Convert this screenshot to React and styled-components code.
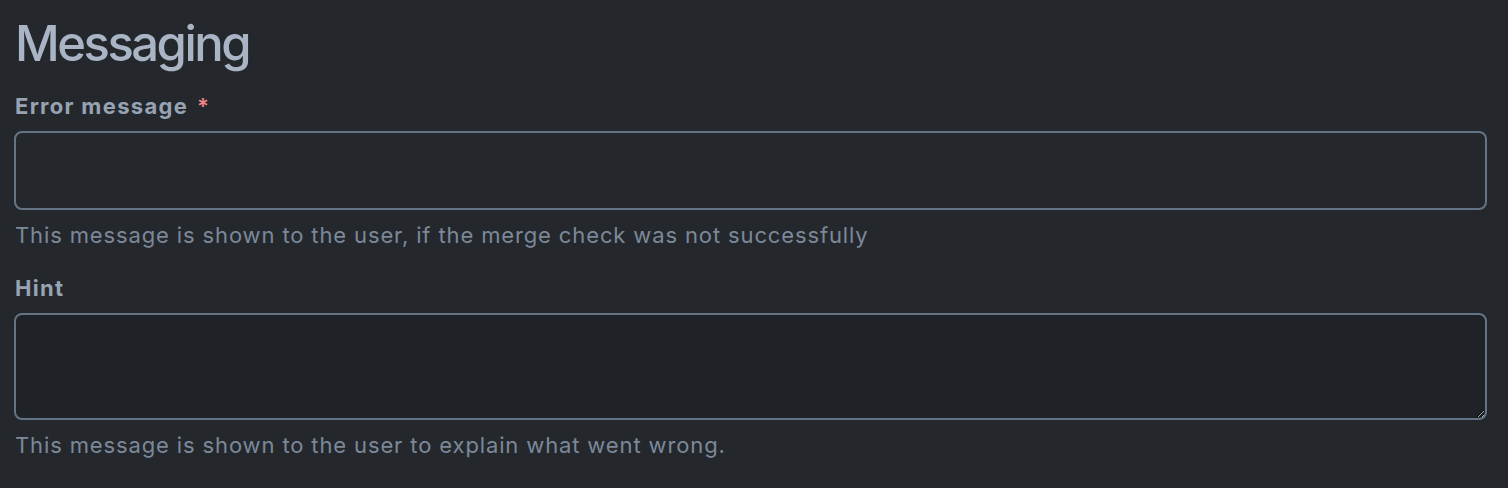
import React from "react";
import styled, { createGlobalStyle } from "styled-components";

const Global = createGlobalStyle`
  html, body {
    margin: 0;
    padding: 0;
    background: #24282d;
  }
  body {
    font-family: Inter, "Noto Sans", sans-serif;
  }
`;

const Page = styled.div`
  padding: 14px 21px 0 14px;
  display: flex;
  flex-direction: column;
`;

const Heading = styled.h2`
  margin: 0;
  font-size: 49px;
  line-height: 59px;
  font-weight: 500;
  color: #a9b4c4;
  letter-spacing: -2.5px;
  padding-left: 1px;
`;

const Field = styled.div`
  display: flex;
  flex-direction: column;
  margin-top: ${(p) => p.$top}px;
`;

const Label = styled.label`
  font-size: 22px;
  line-height: 31px;
  font-weight: 700;
  color: #97a3b3;
  letter-spacing: 1.3px;
  padding-left: 1px;
  display: flex;
  align-items: baseline;
  gap: 9px;
`;

const Required = styled.span`
  color: #f08585;
  font-weight: 600;
`;

const Input = styled.input`
  box-sizing: border-box;
  display: block;
  width: 100%;
  height: 79px;
  margin-top: 9px;
  background: #24282d;
  border: 2px solid #657485;
  border-radius: 8px;
  color: #c9d1d9;
  font: inherit;
  font-size: 21px;
  padding: 0 14px;
  outline: none;
`;

const TextArea = styled.textarea`
  box-sizing: border-box;
  display: block;
  width: 100%;
  height: 107px;
  margin-top: 9px;
  background: #1f2226;
  border: 2px solid #657485;
  border-radius: 8px;
  color: #c9d1d9;
  font: inherit;
  font-size: 21px;
  padding: 10px 14px;
  outline: none;
  resize: vertical;
  color-scheme: dark;
`;

const Help = styled.div`
  font-size: 22px;
  line-height: 31px;
  color: #7c8899;
  letter-spacing: 0.87px;
  margin-top: ${(p) => p.$gap ?? 10}px;
  padding-left: 1px;
`;

export default function App() {
  return (
    <>
      <Global />
      <Page>
        <Heading>Messaging</Heading>
        <Field $top={18}>
          <Label>
            Error message <Required>*</Required>
          </Label>
          <Input type="text" />
          <Help>This message is shown to the user, if the merge check was not successfully</Help>
        </Field>
        <Field $top={22}>
          <Label>Hint</Label>
          <TextArea />
          <Help $gap={10}>This message is shown to the user to explain what went wrong.</Help>
        </Field>
      </Page>
    </>
  );
}
